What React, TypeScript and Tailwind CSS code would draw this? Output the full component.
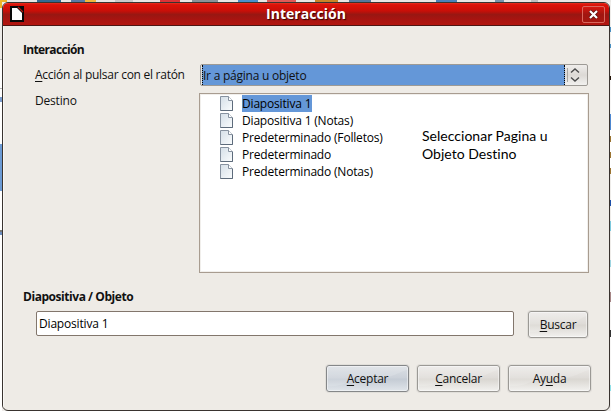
import type { ReactNode } from 'react';

const items = [
  { label: 'Diapositiva 1', cls: 'bg-[#6497d8] w-[70px]' },
  { label: 'Diapositiva 1 (Notas)', cls: '' },
  { label: 'Predeterminado (Folletos)', cls: '' },
  { label: 'Predeterminado', cls: '' },
  { label: 'Predeterminado (Notas)', cls: '' },
];

const topStrip = [
  { w: 'w-[7px]', c: 'bg-[#f0b429]' },
  { w: 'w-[30px]', c: 'bg-[#e9e7e4]' },
  { w: 'w-[24px]', c: 'bg-[#326a92]' },
  { w: 'w-[10px]', c: 'bg-[#e9e7e4]' },
  { w: 'w-[14px]', c: 'bg-[#5a7ba5]' },
  { w: 'w-[11px]', c: 'bg-[#efb73e]' },
  { w: 'w-[19px]', c: 'bg-[#e9e7e4]' },
  { w: 'w-[18px]', c: 'bg-[#c9c9c9]' },
  { w: 'w-[27px]', c: 'bg-[#e9e7e4]' },
  { w: 'w-[20px]', c: 'bg-[#dc3338]' },
  { w: 'w-[12px]', c: 'bg-[#e9e7e4]' },
  { w: 'w-[26px]', c: 'bg-[#8a9298]' },
  { w: 'w-[20px]', c: 'bg-[#e9e7e4]' },
  { w: 'w-[20px]', c: 'bg-[#4a90cc]' },
  { w: 'w-[9px]', c: 'bg-[#e9e7e4]' },
  { w: 'w-[29px]', c: 'bg-[#e05a58]' },
  { w: 'w-[19px]', c: 'bg-[#e9e7e4]' },
  { w: 'w-[23px]', c: 'bg-[#c98428]' },
  { w: 'w-[11px]', c: 'bg-[#e9e7e4]' },
  { w: 'w-[22px]', c: 'bg-[#55789c]' },
  { w: 'w-[65px]', c: 'bg-[#e9e7e4]' },
  { w: 'w-[21px]', c: 'bg-[#4a82ba]' },
  { w: 'w-[38px]', c: 'bg-[#e9e7e4]' },
  { w: 'w-[9px]', c: 'bg-[#7795ad]' },
  { w: 'w-[27px]', c: 'bg-[#e9e7e4]' },
  { w: 'w-[7px]', c: 'bg-[#c0c0c0]' },
  { w: 'w-[73px]', c: 'bg-[#e9e7e4]' },
];

const leftStrip = [
  { h: 'h-[6px]', c: 'bg-[#f0b429]' },
  { h: 'h-[51px]', c: 'bg-[#eeece9]' },
  { h: 'h-[1px]', c: 'bg-[#b5b5b5]' },
  { h: 'h-[28px]', c: 'bg-white' },
  { h: 'h-[1px]', c: 'bg-[#b5b5b5]' },
  { h: 'h-[8px]', c: 'bg-white' },
  { h: 'h-[5px]', c: 'bg-[#7a9ccd]' },
  { h: 'h-[42px]', c: 'bg-white' },
  { h: 'h-[47px]', c: 'bg-[#6c9bd5]' },
  { h: 'h-[39px]', c: 'bg-white' },
  { h: 'h-[2px]', c: 'bg-[#7a7a7a]' },
  { h: 'h-[3px]', c: 'bg-[#6c8fc0]' },
  { h: 'h-[176px]', c: 'bg-white' },
];

const rightStrip = [
  { h: 'h-[25px]', c: 'bg-[#eeece9]' },
  { h: 'h-[5px]', c: 'bg-[#4a8fc0]' },
  { h: 'h-[12px]', c: 'bg-[#eeece9]' },
  { h: 'h-[4px]', c: 'bg-[#4a8fc0]' },
  { h: 'h-[28px]', c: 'bg-[#eeece9]' },
  { h: 'h-[4px]', c: 'bg-[#241408]' },
  { h: 'h-[34px]', c: 'bg-[#f6f5f4]' },
  { h: 'h-[16px]', c: 'bg-[#4d87d0]' },
  { h: 'h-[6px]', c: 'bg-white' },
  { h: 'h-[6px]', c: 'bg-[#9b7432]' },
  { h: 'h-[10px]', c: 'bg-white' },
  { h: 'h-[6px]', c: 'bg-[#9b7432]' },
  { h: 'h-[10px]', c: 'bg-white' },
  { h: 'h-[6px]', c: 'bg-[#9b7432]' },
  { h: 'h-[26px]', c: 'bg-[#eeece9]' },
  { h: 'h-[6px]', c: 'bg-[#1d50a8]' },
  { h: 'h-[15px]', c: 'bg-[#eeece9]' },
  { h: 'h-[10px]', c: 'bg-[#7cc8dc]' },
  { h: 'h-[29px]', c: 'bg-[#eeece9]' },
  { h: 'h-[7px]', c: 'bg-[#9dd4e0]' },
  { h: 'h-[25px]', c: 'bg-[#f6f5f4]' },
  { h: 'h-[10px]', c: 'bg-[#a58585]' },
  { h: 'h-[28px]', c: 'bg-[#f6f5f4]' },
  { h: 'h-[7px]', c: 'bg-[#333333]' },
  { h: 'h-[48px]', c: 'bg-[#f6f5f4]' },
  { h: 'h-[6px]', c: 'bg-[#8fdfe6]' },
  { h: 'h-[20px]', c: 'bg-[#f6f5f4]' },
];

function PageIcon() {
  return (
    <svg width="14" height="17" viewBox="0 0 14 17" className="shrink-0">
      <defs>
        <linearGradient id="sheet" x1="0" y1="0" x2="1" y2="1">
          <stop offset="0" stopColor="#d5dfe8" />
          <stop offset="1" stopColor="#fafcfd" />
        </linearGradient>
      </defs>
      <path d="M.5 1.5h8l4 4v10H.5z" fill="url(#sheet)" stroke="#8792a0" />
      <path d="M12.5 6v9.5H.5" fill="none" stroke="#5d6b7b" />
      <path d="M8.5 1.5v4h4" fill="#fff" stroke="#8792a0" />
    </svg>
  );
}

function Button({ children, className = '', primary = false }: { children: ReactNode; className?: string; primary?: boolean }) {
  const tone = primary
    ? 'border-[#858789] bg-[linear-gradient(#dce0e5_0%,#cbd1d9_48%,#c4cbd4_52%,#e0e5ea_100%)]'
    : 'border-[#9b9995] bg-[linear-gradient(#eceae8_0%,#dedbd7_48%,#d9d6d1_52%,#f2f1ef_100%)]';
  return (
    <button className={`relative flex h-[27px] shrink-0 items-center justify-center overflow-hidden rounded-[3px] border tracking-[-0.25px] shadow-[0_0_0_1px_rgba(0,0,0,0.05),inset_0_0_0_1px_rgba(255,255,255,0.45)] ${tone} ${className}`}>
      <svg className="absolute inset-0 h-full w-full" viewBox="0 0 83 27" preserveAspectRatio="none">
        <path d="M0 22C25 22 18 13 45 13S70 7 83 4V0H0z" fill="#fff" opacity=".15" />
      </svg>
      <span className="relative">{children}</span>
    </button>
  );
}

function Key({ children }: { children: ReactNode }) {
  return <span className="underline decoration-1 underline-offset-2">{children}</span>;
}

export default function App() {
  return (
    <div className="flex h-[411px] w-[611px] flex-col overflow-hidden bg-[#eeece9] font-['Open_Sans','Noto_Sans',sans-serif] text-[12px] leading-[17px] text-[#111]">
      <div className="flex h-[2px] shrink-0">
        {topStrip.map((s, i) => <div key={i} className={`shrink-0 ${s.w} ${s.c}`} />)}
      </div>
      <div className="flex h-[409px]">
        <div className="w-[2px] shrink-0">
          {leftStrip.map((s, i) => <div key={i} className={`${s.h} ${s.c}`} />)}
        </div>
        <div className="flex w-[608px] shrink-0 flex-col overflow-hidden rounded-[6px] border border-[#39332f] bg-[#eeebe6]">
          <header className="flex h-[23px] shrink-0 items-center border-b border-[#4d1512] bg-[linear-gradient(#e83020_0%,#dc1208_8%,#c80f08_36%,#981712_52%,#a81410_75%,#b3150f_100%)]">
            <svg width="14" height="16" viewBox="0 0 14 16" className="ml-[7px] shrink-0">
              <path d="M0 0h14v16H0z" fill="#080808" />
              <path d="M2 2h5l5 5v7H2z" fill="#fff" />
              <path d="M8 1l5 5" stroke="#b51a12" strokeWidth="1.3" />
            </svg>
            <h1 className="flex-1 pl-[6px] text-center text-[14px] leading-[20px] font-bold tracking-[0.05px] text-white [text-shadow:1px_1px_1px_#300]">Interacción</h1>
            <div className="mr-[4px] flex h-[17px] w-[23px] items-center justify-center rounded-[2px] border border-[#d9675d] bg-[linear-gradient(#d8170e,#a11610_50%,#a81710)]">
              <svg width="11" height="11" viewBox="0 0 11 11">
                <path d="M2 2l7 7M9 2l-7 7" stroke="#511" strokeWidth="3.6" />
                <path d="M2 2l7 7M9 2l-7 7" stroke="#fff" strokeWidth="2.2" />
              </svg>
            </div>
          </header>
          <main className="flex flex-1 flex-col border-l border-[#f9f8f6] pl-[19px]">
            <h2 className="mt-[15px] h-[17px] font-bold tracking-[-0.65px]">Interacción</h2>
            <div className="mt-[6px] flex h-[22px] pl-[12px]">
              <label className="w-[165px] shrink-0 pt-[2px] tracking-[-0.27px]"><Key>A</Key>cción al pulsar con el ratón</label>
              <div className="flex h-[22px] w-[388px] shrink-0 overflow-hidden rounded-[2px] border border-[#9d9a95] bg-[linear-gradient(#efedeb,#dcd9d5_50%,#f2f1ef)]">
                <div className="ml-px flex w-[363px] shrink-0 items-center border-x border-dotted border-black bg-[#6497d8] tracking-[-0.24px]">Ir a página u objeto</div>
                <div className="my-[3px] ml-[2px] flex flex-1 items-center border-l border-[#aaa7a3] pl-[2px]">
                  <svg width="10" height="14" viewBox="0 0 10 14" fill="none" stroke="#4c4c4c" strokeWidth="1.4">
                    <path d="M1 4.5L5 1l4 3.5M1 9.5L5 13l4-3.5" />
                  </svg>
                </div>
              </div>
            </div>
            <div className="mt-[7px] flex h-[180px] pl-[12px]">
              <div className="-mt-px w-[164px] shrink-0 tracking-[-0.2px]">Destino</div>
              <div className="flex h-[180px] w-[390px] shrink-0 border border-[#a89c90] bg-white pt-[1px] text-black shadow-[inset_0_0_0_1px_#f1efec]">
                <ul className="w-[222px] shrink-0 pl-[20px]">
                  {items.map((it) => (
                    <li key={it.label} className="flex h-[17px] items-center">
                      <PageIcon />
                      <span className={`ml-[8px] h-[17px] tracking-[-0.18px] whitespace-nowrap ${it.cls}`}>{it.label}</span>
                    </li>
                  ))}
                </ul>
                <p className="pt-[32px] font-['Lato',sans-serif] text-[14px] leading-[18px] tracking-[0.02px] whitespace-nowrap [font-variant-ligatures:none]">Seleccionar Pagina u<br />Objeto Destino</p>
              </div>
            </div>
            <h2 className="mt-[15px] h-[17px] font-bold tracking-[-0.45px]">Diapositiva / Objeto</h2>
            <div className="mt-[6px] flex h-[27px] gap-[14px] pl-[13px]">
              <div className="flex h-[25px] w-[478px] items-center rounded-[2px] border border-[#82766c] bg-white pl-[2px] tracking-[-0.18px] text-black">Diapositiva 1</div>
              <Button className="w-[60px]"><Key>B</Key>uscar</Button>
            </div>
            <div className="mt-[27px] flex gap-[8px] pl-[303px]">
              <Button primary className="w-[83px]"><Key>A</Key>ceptar</Button>
              <Button className="w-[83px]"><Key>C</Key>ancelar</Button>
              <Button className="w-[83px]">Ay<Key>u</Key>da</Button>
            </div>
          </main>
        </div>
        <div className="w-[1px] shrink-0">
          {rightStrip.map((s, i) => <div key={i} className={`${s.h} ${s.c}`} />)}
        </div>
      </div>
    </div>
  );
}
